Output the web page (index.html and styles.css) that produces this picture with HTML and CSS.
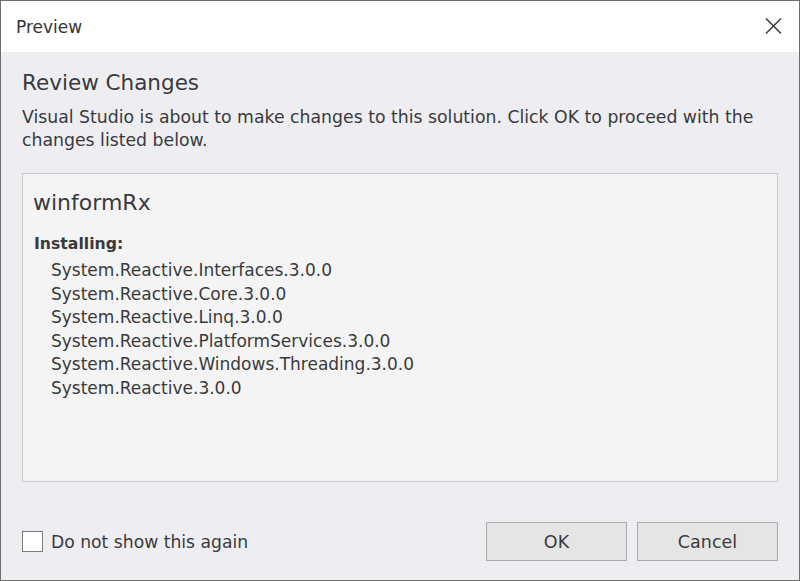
FILE: index.html
```html
<!DOCTYPE html>
<html>
<head>
<meta charset="utf-8">
<link rel="stylesheet" href="styles.css">
</head>
<body>
<div class="window">
  <div class="titlebar">
    <span class="title">Preview</span>
    <svg class="close" width="17" height="16" viewBox="0 0 17 16"><path d="M1 0.5 L16 15.5 M16 0.5 L1 15.5" stroke="#3c3c3c" stroke-width="1.5" fill="none"/></svg>
  </div>
  <div class="content">
    <h1 class="heading">Review Changes</h1>
    <p class="desc">Visual Studio is about to make changes to this solution. Click OK to proceed with the changes listed below.</p>
    <div class="panel">
      <div class="project">winformRx</div>
      <div class="section">Installing:</div>
      <ul class="pkgs">
        <li>System.Reactive.Interfaces.3.0.0</li>
        <li>System.Reactive.Core.3.0.0</li>
        <li>System.Reactive.Linq.3.0.0</li>
        <li>System.Reactive.PlatformServices.3.0.0</li>
        <li>System.Reactive.Windows.Threading.3.0.0</li>
        <li>System.Reactive.3.0.0</li>
      </ul>
    </div>
    <div class="footer">
      <label class="check"><span class="box"></span>Do not show this again</label>
      <div class="buttons">
        <button class="btn">OK</button>
        <button class="btn">Cancel</button>
      </div>
    </div>
  </div>
</div>
</body>
</html>
```
FILE: styles.css
```css
html, body {
  margin: 0;
  padding: 0;
  background: #eeeef2;
}
.window {
  width: 800px;
  height: 581px;
  box-sizing: border-box;
  border: 1px solid #6e6e6e;
  display: flex;
  flex-direction: column;
  font-family: "DejaVu Sans", sans-serif;
  color: #3a3a3c;
  background: #eeeef2;
}
.titlebar {
  height: 51px;
  flex: none;
  background: #ffffff;
  display: flex;
  align-items: center;
  justify-content: space-between;
  padding: 0 17px 0 15px;
}
.title {
  font-size: 17px;
  color: #333335;
}
.close {
  display: block;
  margin-top: -2px;
}
.content {
  flex: 1;
  display: flex;
  flex-direction: column;
  padding: 16px 21px 19px 21px;
}
.heading {
  margin: 0;
  font-weight: normal;
  font-size: 21.5px;
  line-height: 30px;
  color: #3a3a3c;
}
.desc {
  margin: 8px 0 0 0;
  font-size: 17.3px;
  line-height: 23px;
}
.panel {
  margin-top: 21px;
  height: 309px;
  box-sizing: border-box;
  border: 1px solid #c9c9cc;
  background: #f4f4f4;
  padding: 15px 10px 0 10px;
}
.project {
  font-size: 22px;
  line-height: 28px;
}
.section {
  margin-top: 16px;
  font-size: 15.7px;
  font-weight: bold;
  line-height: 22px;
  padding-left: 1px;
}
.pkgs {
  list-style: none;
  margin: 4px 0 0 0;
  padding: 0 0 0 18px;
  font-size: 17px;
  line-height: 23.6px;
}
.footer {
  margin-top: auto;
  display: flex;
  align-items: center;
  justify-content: space-between;
}
.check {
  display: flex;
  align-items: center;
  font-size: 17.2px;
  line-height: 22px;
}
.box {
  width: 19px;
  height: 19px;
  border: 1px solid #7a7a7a;
  background: #fff;
  margin: 0 8px 0 0;
}
.buttons {
  display: flex;
  gap: 10px;
}
.btn {
  width: 141px;
  height: 39px;
  border: 1px solid #acacac;
  background: #e5e5e5;
  font-family: "DejaVu Sans", sans-serif;
  font-size: 17.5px;
  color: #3a3a3c;
  padding: 0;
}
```
